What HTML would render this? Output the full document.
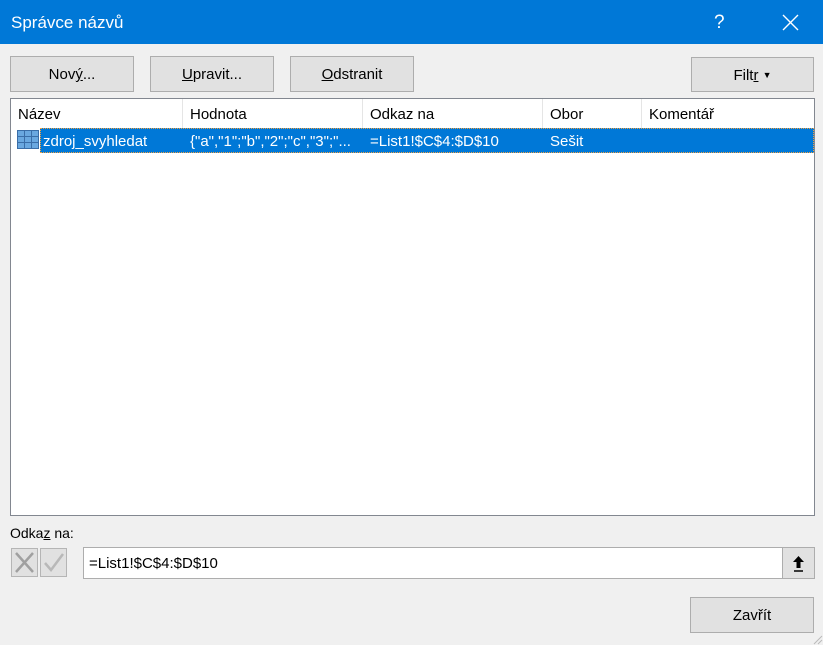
<!DOCTYPE html>
<html><head><meta charset="utf-8"><style>
*{box-sizing:border-box;margin:0;padding:0}
body{width:823px;height:645px;background:#f0f0f0;font-family:"Liberation Sans",sans-serif;font-size:14px;color:#000;position:relative;overflow:hidden}
.abs{position:absolute}
.title{left:0;top:0;width:823px;height:44px;background:#0078d7;color:#fff}
.btn{background:#e1e1e1;border:1px solid #adadad;text-align:center;font-size:15px}
.list{left:10px;top:98px;width:805px;height:418px;background:#fff;border:1px solid #828790}
.hd{top:0;height:29px;line-height:32px;border-right:1px solid #e5e5e5;padding-left:7px;font-size:15px}
.sel{left:29px;top:29px;width:774px;height:25px;background:#0078d7;border:1px dotted #f0a040;color:#fff;font-size:15px;line-height:25px}
u{text-decoration:underline}
</style></head><body>
<div class="abs title">
 <div class="abs" style="left:11px;top:13px;font-size:17px">Správce názvů</div>
 <div class="abs" style="left:714px;top:12px;font-size:19px">?</div>
 <svg class="abs" style="left:782px;top:14px" width="17" height="17"><path d="M1 1L16 16M16 1L1 16" stroke="#fff" stroke-width="1.4"/></svg>
</div>
<div class="abs btn" style="left:10px;top:56px;width:124px;height:36px;line-height:36px">Nov<u>ý</u>...</div>
<div class="abs btn" style="left:150px;top:56px;width:124px;height:36px;line-height:36px"><u>U</u>pravit...</div>
<div class="abs btn" style="left:290px;top:56px;width:124px;height:36px;line-height:36px"><u>O</u>dstranit</div>
<div class="abs btn" style="left:691px;top:57px;width:123px;height:35px;line-height:35px">Filt<u>r</u> <span style="font-size:9px;vertical-align:2px">▼</span></div>
<div class="abs list">
 <div class="abs hd" style="left:0;width:172px">Název</div>
 <div class="abs hd" style="left:172px;width:180px">Hodnota</div>
 <div class="abs hd" style="left:352px;width:180px">Odkaz na</div>
 <div class="abs hd" style="left:532px;width:99px">Obor</div>
 <div class="abs hd" style="left:631px;width:172px;border-right:none">Komentář</div>
 <svg class="abs" style="left:6px;top:31px" width="22" height="19"><rect x="0.5" y="0.5" width="21" height="18" fill="#6aa8e0" stroke="#3a6ea8"/><path d="M7.5 1V18M14.5 1V18M1 6.5H21M1 12.5H21" stroke="#3a6ea8"/></svg>
 <div class="abs sel">
  <span class="abs" style="left:2px">zdroj_svyhledat</span>
  <span class="abs" style="left:149px">{"a","1";"b","2";"c","3";"...</span>
  <span class="abs" style="left:329px">=List1!$C$4:$D$10</span>
  <span class="abs" style="left:509px">Sešit</span>
 </div>
</div>
<div class="abs" style="left:10px;top:525px;font-size:14px">Odka<u>z</u> na:</div>
<div class="abs" style="left:11px;top:548px;width:27px;height:29px;border:1px solid #b5b5b5;background:#e1e1e1"><svg width="25" height="27"><path d="M4 4L21 23M21 4L4 23" stroke="#a0a0a0" stroke-width="2.5"/></svg></div>
<div class="abs" style="left:40px;top:548px;width:27px;height:29px;border:1px solid #b5b5b5;background:#e1e1e1"><svg width="25" height="27"><path d="M4 14L10 21L22 5" stroke="#b8b8b8" stroke-width="2.5" fill="none"/></svg></div>
<div class="abs" style="left:83px;top:547px;width:732px;height:32px;background:#fff;border:1px solid #adadad">
 <div class="abs" style="left:5px;top:7px;font-size:15px">=List1!$C$4:$D$10</div>
 <div class="abs" style="left:698px;top:0;width:32px;height:30px;background:#e1e1e1;border-left:1px solid #adadad"><svg width="32" height="30"><path d="M15.5 8L10 14H13.5V20H17.5V14H21Z" fill="#000"/><path d="M11 23H20" stroke="#000" stroke-width="1.5"/></svg></div>
</div>
<div class="abs btn" style="left:690px;top:597px;width:124px;height:36px;line-height:36px">Zavřít</div>
<svg class="abs" style="left:811px;top:633px" width="12" height="12"><path d="M11 3L3 11M11 7L7 11" stroke="#bbb"/></svg>
</body></html>
